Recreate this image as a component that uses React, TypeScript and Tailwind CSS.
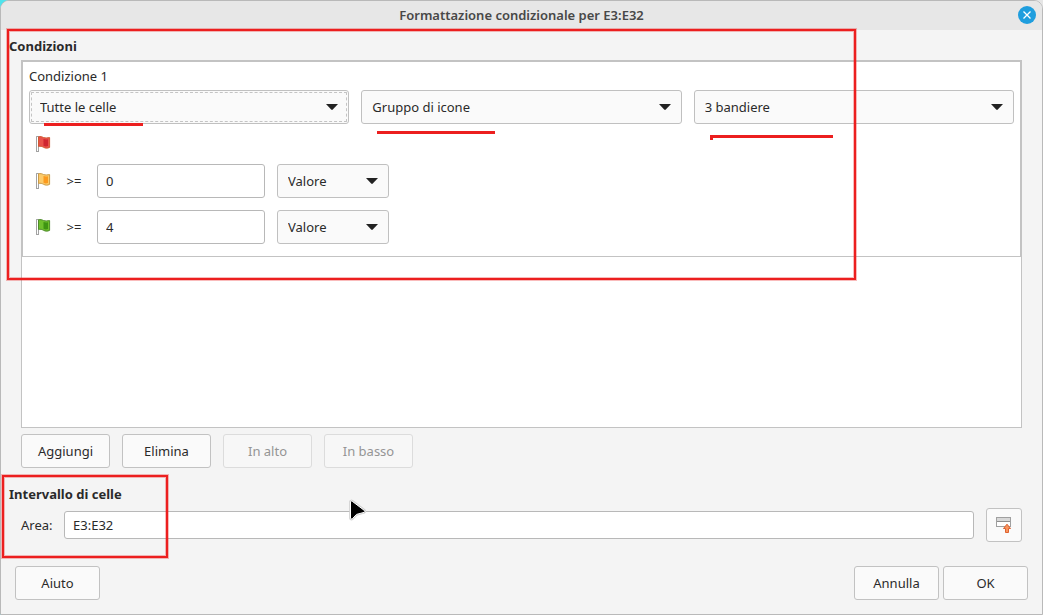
import { useState } from "react"

type FlagColor = "red" | "yellow" | "green"

const flagColors: Record<FlagColor, { edge: string, light: string, dark: string }> = {
  red: { edge: "#cf5a33", light: "#e8514b", dark: "#cf2530" },
  yellow: { edge: "#c99b4a", light: "#fccb6a", dark: "#fb9a1e" },
  green: { edge: "#4f8a2c", light: "#6fc02c", dark: "#3f9412" },
}

function Flag({ color }: { color: FlagColor }) {
  const { edge, light, dark } = flagColors[color]

  return (
    <svg className="size-4 shrink-0" viewBox="0 0 16 16" aria-hidden="true">
      <rect x="1" y="0" width="3" height="16" rx="0.5" fill="#a2a2a2" />
      <rect x="2" y="1" width="1" height="14" fill="#fff" />
      <path d="M3.5 0.8C5.5 0.3 7 0.8 8.5 1.5C10.5 2.3 12.5 1.8 14.6 1.6V11.4C12.5 12.4 10.5 12.4 8.5 11.3C7 10.4 5.5 10 3.5 10.4Z" fill={light} stroke={edge} />
      <path d="M8.5 3C10 3.5 11.5 3.5 13 3.2V10C11.5 10.7 10 10.6 8.5 9.8Z" fill={dark} />
    </svg>
  )
}

type SelectProps = {
  label: string
  options: string[]
  className: string
  focused?: boolean
}

function Select({ label, options, className, focused }: SelectProps) {
  return (
    <div className={`relative ${className}`}>
      <select
        aria-label={label}
        className={`block h-[34px] w-full appearance-none rounded-[3px] border border-[#c0c0c0] bg-[#fafafa] pl-2.5 pr-8 ${focused ? "outline-1 -outline-offset-3 outline-dashed outline-[#c4c4c4]" : "outline-none"}`}
      >
        {options.map(o => <option key={o}>{o}</option>)}
      </select>
      <svg
        className="pointer-events-none absolute right-[11px] top-3.5 h-1.5 w-3"
        viewBox="0 0 12 6"
        aria-hidden="true"
      >
        <path d="M0 0H12L6.8 5.6Q6 6.3 5.2 5.6Z" fill="#222" />
      </svg>
    </div>
  )
}

type ButtonProps = {
  children: string
  className: string
  disabled?: boolean
}

function Button({ children, className, disabled }: ButtonProps) {
  return (
    <button
      type="button"
      disabled={disabled}
      className={`h-[34px] rounded-[3px] border border-[#c2c2c2] bg-[#fafafa] hover:bg-white disabled:border-[#dcdcdc] disabled:bg-[#f7f7f7] disabled:text-[#959595] ${className}`}
    >
      {children}
    </button>
  )
}

function IconRule({ color, initial }: { color: FlagColor, initial: string }) {
  const [value, setValue] = useState(initial)

  return (
    <div className="mt-3 flex items-center gap-3 pl-1.5">
      <Flag color={color} />
      <span className="w-[22px] text-center">&gt;=</span>
      <input
        aria-label="Soglia"
        className="h-[34px] w-[168px] rounded-[3px] border border-[#b8b8b8] bg-white px-2 outline-none"
        value={value}
        onChange={e => setValue(e.target.value)}
      />
      <Select
        label="Tipo"
        className="w-[112px]"
        options={["Valore", "Percentuale", "Percentile", "Formula"]}
      />
    </div>
  )
}

// red marks drawn by hand over the dialog
function Annotations() {
  return (
    <div className="pointer-events-none absolute inset-0" aria-hidden="true">
      <div className="absolute left-[7px] top-[29px] h-[251px] w-[849px] border-2 border-[#ec1f1f] ring-1 ring-[#ec1f1f]/30 inset-ring-1 inset-ring-[#ec1f1f]/30" />
      <div className="absolute left-[2px] top-[475px] h-[83px] w-[166px] border-2 border-[#ec1f1f] ring-1 ring-[#ec1f1f]/30 inset-ring-1 inset-ring-[#ec1f1f]/30" />
      <div className="absolute left-[44px] top-[123px] h-[3px] w-[99px] bg-[#ec1f1f]" />
      <div className="absolute left-[377px] top-[131px] h-[3px] w-[118px] bg-[#ec1f1f]" />
      <div className="absolute left-[710px] top-[135px] h-[3px] w-[123px] bg-[#ec1f1f]" />
      <div className="absolute left-[710px] top-[135px] h-[5px] w-[3px] bg-[#ec1f1f]" />
      <svg className="absolute left-[348px] top-[499px] h-6 w-5" viewBox="0 0 20 24">
        <path d="M2.5 2.5V19.2Q2.8 20.6 4.3 19.8L8.5 15.4L16 13.4Q17.6 12.4 16.3 11.4L4.4 2.4Q3 1.4 2.5 2.5Z" fill="#000" stroke="#cfcfcf" strokeWidth="2.6" />
        <path d="M2.5 2.5V19.2Q2.8 20.6 4.3 19.8L8.5 15.4L16 13.4Q17.6 12.4 16.3 11.4L4.4 2.4Q3 1.4 2.5 2.5Z" fill="#000" stroke="#fff" strokeWidth="1" />
      </svg>
    </div>
  )
}

export default function App() {
  const [area, setArea] = useState("E3:E32")

  return (
    <div className="relative min-h-screen bg-[linear-gradient(to_right,#4fe3ec_50%,#e6e6e6_50%)] font-['Noto_Sans','Open_Sans',sans-serif] text-[13px] leading-5 text-[#2a2a2a]">
      <div className="flex min-h-screen flex-col overflow-hidden rounded-t-[9px] border border-[#b9b9b9] bg-[#f4f4f4]">
        <header className="relative flex h-[29px] items-center justify-center bg-[#e7e7e7] pb-0.5">
          <h1 className="font-semibold text-[#484848]">Formattazione condizionale per E3:E32</h1>
          <button
            type="button"
            aria-label="Chiudi"
            className="absolute right-1.5 top-[5px] flex size-[18px] items-center justify-center rounded-full bg-[#1f9ede]"
          >
            <svg className="size-2" viewBox="0 0 8 8" aria-hidden="true">
              <path d="M0.5 0.5L7.5 7.5M7.5 0.5L0.5 7.5" stroke="#fff" strokeWidth="1.3" />
            </svg>
          </button>
        </header>

        <main className="flex flex-1 flex-col px-2 pb-3.5 pt-1.5">
          <h2 className="font-bold">Condizioni</h2>
          <section className="mx-3 mt-1 flex-1 border border-[#c3c3c3] bg-white">
            <div className="border border-[#c3c3c3] px-1.5 pb-3 pt-1">
              <p>Condizione 1</p>
              <div className="mt-1 flex gap-3">
                <Select
                  label="Condizione"
                  className="flex-1"
                  options={["Tutte le celle", "Il valore della cella è", "La formula è", "La data è"]}
                  focused
                />
                <Select
                  label="Formato"
                  className="flex-1"
                  options={["Gruppo di icone", "Barra di dati", "Scala di colori"]}
                />
                <Select
                  label="Icone"
                  className="flex-1"
                  options={["3 bandiere", "3 frecce", "3 semafori"]}
                />
              </div>
              <div className="mt-3 pl-1.5">
                <Flag color="red" />
              </div>
              <IconRule color="yellow" initial="0" />
              <IconRule color="green" initial="4" />
            </div>
          </section>

          <div className="mx-3 mt-1.5 flex gap-3">
            <Button className="w-[89px]">Aggiungi</Button>
            <Button className="w-[89px]">Elimina</Button>
            <Button className="w-[89px]" disabled>In alto</Button>
            <Button className="w-[89px]" disabled>In basso</Button>
          </div>

          <h2 className="mt-4 font-bold">Intervallo di celle</h2>
          <div className="mx-3 mt-1 flex items-center gap-3">
            <label htmlFor="area" className="w-[31px] whitespace-nowrap">Area:</label>
            <input
              id="area"
              className="h-7 min-w-0 flex-1 rounded-[3px] border border-[#b8b8b8] bg-white px-2 outline-none"
              value={area}
              onChange={e => setArea(e.target.value)}
            />
            <button
              type="button"
              aria-label="Riduci"
              className="flex h-[34px] w-9 items-center justify-center rounded-[3px] border border-[#c2c2c2] bg-[#fafafa]"
            >
              <svg className="size-4" viewBox="0 0 16 16" aria-hidden="true">
                <rect x="0.5" y="0.5" width="14" height="9" fill="#fff" stroke="#a0a0a0" />
                <rect x="1" y="1" width="13" height="3" fill="#d8d8d8" />
                <path d="M1 4.5H14" stroke="#8f8f8f" />
                <path d="M11 7.2L14.5 11.5H12.5V15.5H9.5V11.5H7.5Z" fill="#f9935c" stroke="#dd6230" />
              </svg>
            </button>
          </div>

          <footer className="mt-6 flex gap-1 px-1.5">
            <Button className="mr-auto w-[85px]">Aiuto</Button>
            <Button className="w-[85px]">Annulla</Button>
            <Button className="w-[85px]">OK</Button>
          </footer>
        </main>
      </div>
      <Annotations />
    </div>
  )
}
